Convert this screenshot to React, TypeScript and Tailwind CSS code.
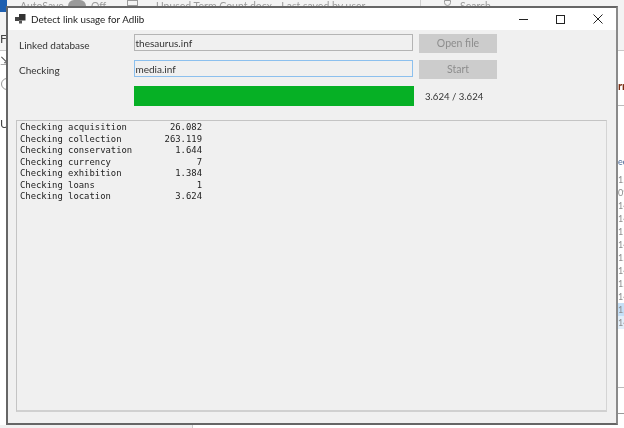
import React from "react";

const rows: [string, string][] = [
  ["acquisition", "26.082"],
  ["collection", "263.119"],
  ["conservation", "1.644"],
  ["currency", "7"],
  ["exhibition", "1.384"],
  ["loans", "1"],
  ["location", "3.624"],
];

const sideNums = ["15", "09", "14", "14", "11", "14", "15", "14", "15", "14", "15", "14"];

function Background() {
  return (
    <div className="absolute inset-0 bg-white overflow-hidden text-[#9a9a9a] font-['Lato',sans-serif]">
      <div className="h-[51px] bg-[#f3f3f3] border-b border-[#c8c8c8] relative text-[10.5px] leading-[12px]">
        <span className="absolute left-[20px] top-0">AutoSave</span>
        <div className="absolute left-[68px] top-0 w-[18px] h-[6px] rounded-t-full bg-[#9a9a9a]" />
        <span className="absolute left-[91px] top-0">Off</span>
        <div className="absolute left-[127px] top-0 w-[11px] h-[6px] border border-[#9a9a9a]" />
        <span className="absolute left-[156px] top-0">Unused Term Count.docx - Last saved by user</span>
        <div className="absolute left-[420px] top-0 w-px h-[7px] bg-[#cfcfcf]" />
        <div className="absolute left-[444px] top-0 w-[7px] h-[6px] rounded-b-full border border-[#9a9a9a]" />
        <span className="absolute left-[460px] top-0">Search</span>
      </div>
      <div className="absolute left-0 top-0 w-[7px] h-[12px] bg-[#1e5fb0]" />
      <span className="absolute left-0 top-[30px] text-[12px] text-[#444]">Fi</span>
      <span className="absolute left-0 top-[52px] text-[12px] text-[#555]">⇲</span>
      <div className="absolute left-[1px] top-[78px] w-[12px] h-[12px] rounded-full border border-[#999]" />
      <span className="absolute left-0 top-[115px] text-[12px] text-[#444]">U</span>
      <span className="absolute left-[618px] top-[78px] text-[11px] font-bold text-[#7a2c10]">rr</span>
      <div className="absolute left-[617px] top-[105px] w-[7px] h-px bg-[#bbb]" />
      <span className="absolute left-[618px] top-[155px] text-[9px] text-[#4a6a9a]">ec</span>
      <div className="absolute left-[618px] top-[173px] flex flex-col text-[9px] leading-[13px] w-[6px] text-[#8c8c8c]">
        {sideNums.map((n, i) => (
          <span key={i} className={i === 10 ? "bg-[#c6e0f7]" : i === 11 ? "bg-[#e2effa]" : ""}>{n}</span>
        ))}
      </div>
      <div className="absolute left-[617px] top-[387px] w-[7px] h-px bg-[#bbb]" />
      <div className="absolute left-[617px] top-[413px] w-[7px] h-px bg-[#999]" />
      <div className="absolute left-0 top-[425px] w-[193px] h-[3px] bg-[#f1f1f1] border-r border-[#ccc]" />
    </div>
  );
}

export default function App() {
  return (
    <div className="relative w-[624px] h-[428px] overflow-hidden font-['Lato',sans-serif] blur-[0.35px]">
      <Background />
      <div className="absolute left-[6px] top-[6px] w-[612px] h-[419px] border-2 border-[#666666] border-r-[#8a8a8a] bg-[#f0f0f0] flex flex-col text-[#333]">
        <div className="h-[22px] bg-white flex items-center shrink-0">
          <svg width="12" height="12" viewBox="0 0 12 12" className="ml-[6px] mr-[5px] mt-[1px]">
            <rect x="5" y="0" width="6.5" height="6.5" fill="#333" />
            <rect x="1" y="3" width="4" height="4" fill="#444" />
            <rect x="5" y="6.5" width="3" height="3" fill="#555" />
          </svg>
          <span className="text-[9.8px] text-[#222]">Detect link usage for Adlib</span>
          <div className="ml-auto flex items-center h-full">
            <div className="w-[37px] flex justify-center">
              <div className="w-[9px] h-[1px] bg-[#222]" />
            </div>
            <div className="w-[37px] flex justify-center">
              <div className="w-[9px] h-[9px] border border-[#222]" />
            </div>
            <div className="w-[37px] flex justify-center">
              <svg width="10" height="10" viewBox="0 0 10 10">
                <path d="M0.5 0.5 L9.5 9.5 M9.5 0.5 L0.5 9.5" stroke="#222" strokeWidth="1" fill="none" />
              </svg>
            </div>
          </div>
        </div>
        <div className="flex-1 flex flex-col pl-[8px] pr-[9px] pt-[4px] pb-[11px]">
          <div className="flex items-start h-[19px]">
            <span className="w-[118px] text-[10px] leading-[13px] pl-[3px] pt-[5px]">Linked database</span>
            <div className="w-[279px] h-[17px] border border-[#b4b4b4] text-[10px] leading-[13px] pl-[0.5px] pt-[1.5px]">thesaurus.inf</div>
            <div className="ml-[6px] w-[78px] h-[19px] bg-[#cccccc] text-[#8d8d8d] text-[10.5px] flex items-center justify-center">Open file</div>
          </div>
          <div className="flex items-start h-[19px] mt-[7px]">
            <span className="w-[118px] text-[10px] leading-[13px] pl-[3px] pt-[4px]">Checking</span>
            <div className="w-[279px] h-[17px] border border-[#8cc0ee] text-[10px] leading-[13px] pl-[0.5px] pt-[2px]">media.inf</div>
            <div className="ml-[6px] w-[78px] h-[19px] bg-[#cccccc] text-[#8d8d8d] text-[10.5px] flex items-center justify-center">Start</div>
          </div>
          <div className="flex items-center h-[20px] mt-[7px]">
            <div className="ml-[118px] w-[280px] h-[20px] bg-[#06b025]" />
            <span className="ml-[11px] text-[9.6px] pt-[2px]">3.624 / 3.624</span>
          </div>
          <div className="mt-[14px] flex-1 border border-[#c4c4c4] border-r-[#d4d4d4] border-b-2 border-b-[#d0d0d0] pl-[3px] pt-[1px] font-['DejaVu_Sans_Mono',monospace] text-[8.9px] leading-[11.5px] text-[#222]">
            {rows.map(([name, n]) => (
              <div key={name} className="flex w-[182px]">
                <span>Checking {name}</span>
                <span className="ml-auto">{n}</span>
              </div>
            ))}
          </div>
        </div>
      </div>
    </div>
  );
}
